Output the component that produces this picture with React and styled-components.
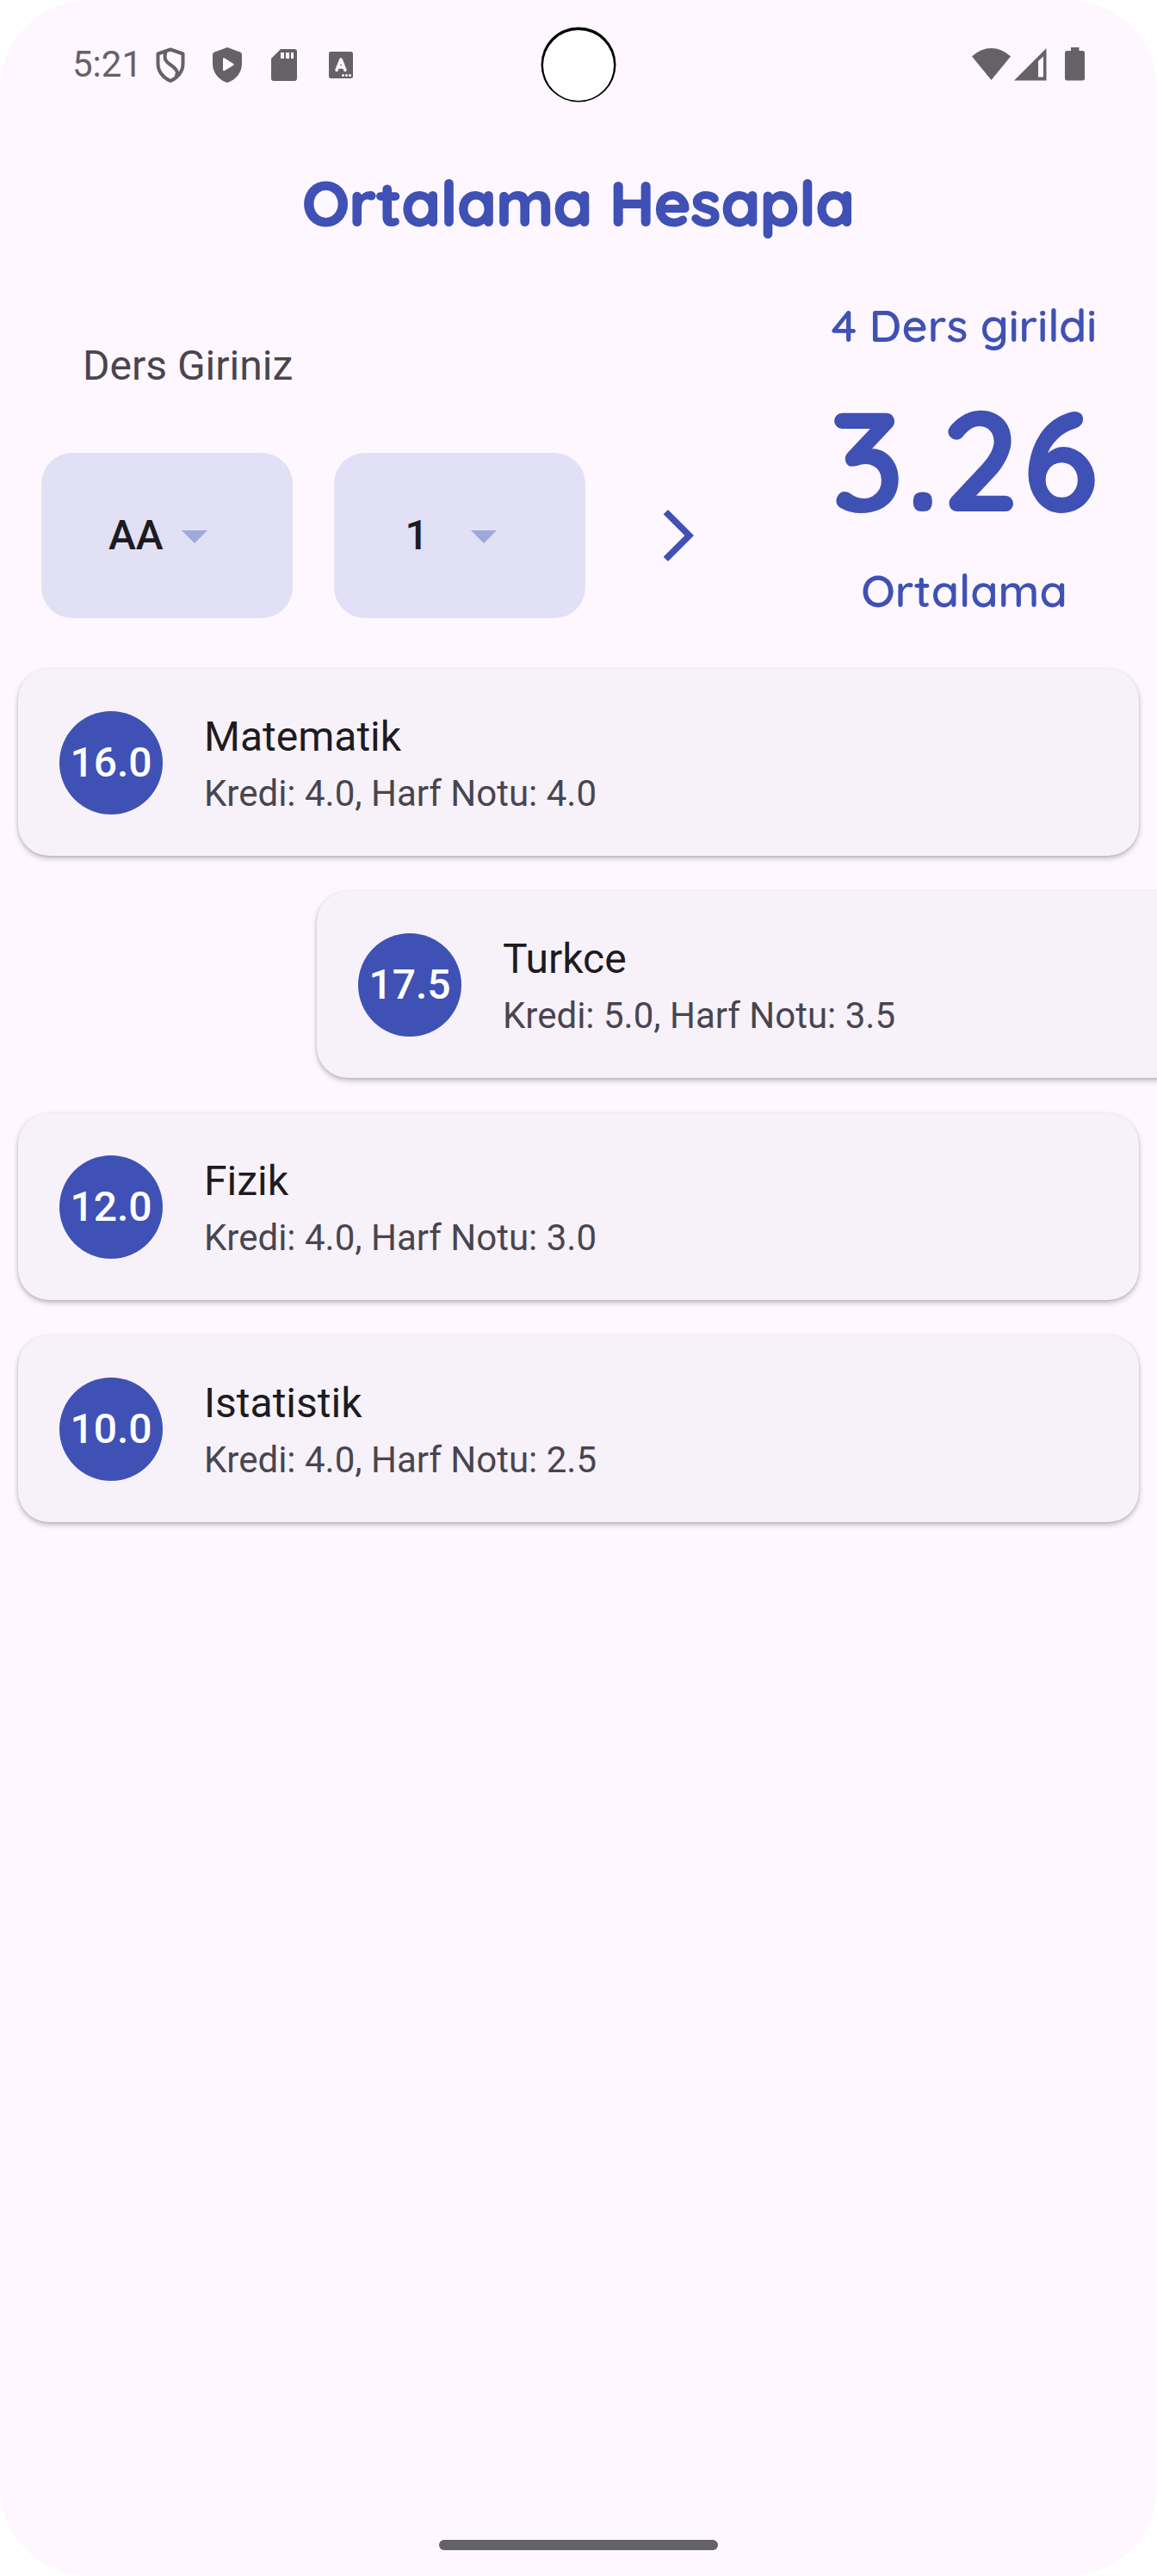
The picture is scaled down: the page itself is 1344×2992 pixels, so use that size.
import React, { useState } from "react";
import styled, { createGlobalStyle, css } from "styled-components";

const indigo = "#3F51B5";
const surface = "#FEF7FF";
const statusInk = "#656267";

const GlobalStyle = createGlobalStyle`
  *, *::before, *::after { box-sizing: border-box; }
  body {
    margin: 0;
    background: #ffffff;
    font-family: Roboto, "Liberation Sans", sans-serif;
  }
`;

const display = css`
  font-family: Quicksand, Inter, sans-serif;
  color: ${indigo};
`;

const Screen = styled.div`
  display: flex;
  flex-direction: column;
  min-height: 100vh;
  overflow: hidden;
  background: ${surface};
  border-radius: 104px;
`;

const StatusBar = styled.header`
  display: grid;
  grid-template-columns: 1fr auto 1fr;
  align-items: center;
  padding: 31px 84px 0;
  color: ${statusInk};
`;

const StatusGroup = styled.div`
  display: flex;
  align-items: center;
  justify-content: ${({ $end }) => ($end ? "flex-end" : "flex-start")};
  gap: ${({ $gap }) => $gap}px;
`;

const Clock = styled.time`
  font-size: 42px;
  line-height: 48px;
`;

const Camera = styled.svg`
  display: block;
  width: 88px;
  height: 88px;
`;

const StatusIcon = styled.svg`
  display: block;
  width: ${({ $width }) => $width || 42}px;
  height: 42px;
  fill: currentColor;
`;

const Title = styled.h1`
  ${display}
  margin: 0;
  padding: 71px 24px 0;
  text-align: center;
  font-size: 72px;
  line-height: 90px;
  font-weight: 700;
  -webkit-text-stroke: 2px ${indigo};
`;

const Summary = styled.section`
  display: grid;
  grid-template-columns: 2fr 1fr;
  padding-top: 66px;
`;

const Form = styled.form`
  display: flex;
  flex-direction: column;
  gap: 24px;
  padding: 0 24px;
`;

const CourseInput = styled.input`
  width: 100%;
  height: 156px;
  padding: 0 72px;
  border: 0;
  outline: 0;
  background: transparent;
  font-family: inherit;
  font-size: 48px;
  line-height: 72px;
  color: #1d1b20;
  &::placeholder { color: #49454f; opacity: 1; }
`;

const FormRow = styled.div`
  display: flex;
  gap: 24px;
  padding-left: 24px;
`;

const Pickers = styled.div`
  display: grid;
  flex: 1;
  grid-template-columns: 1fr 1fr;
  gap: 48px;
`;

const Picker = styled.div`
  display: grid;
  place-content: center;
  align-items: center;
  height: 192px;
  border-radius: 36px;
  background: #e1e0f5;
`;

const PickerSelect = styled.select`
  grid-area: 1 / 1;
  appearance: none;
  margin: 0;
  padding: 0 72px 0 0;
  border: 0;
  outline: 0;
  background: transparent;
  font-family: inherit;
  font-size: 48px;
  line-height: 72px;
  font-weight: 500;
  color: #1d1b20;
`;

const PickerArrow = styled.svg`
  grid-area: 1 / 1;
  justify-self: end;
  width: 72px;
  height: 72px;
  fill: #9fa8da;
  pointer-events: none;
`;

const AddButton = styled.button`
  display: grid;
  place-items: center;
  flex: none;
  width: 168px;
  padding: 0;
  border: 0;
  background: transparent;
  color: ${indigo};
  cursor: pointer;
`;

const AddIcon = styled.svg`
  width: 72px;
  height: 72px;
  fill: currentColor;
`;

const Average = styled.div`
  display: flex;
  flex-direction: column;
  align-items: center;
  justify-content: space-between;
`;

const AverageText = styled.p`
  ${display}
  margin: 0;
  font-size: 52px;
  line-height: 64px;
  font-weight: 600;
`;

const AverageValue = styled.p`
  ${display}
  margin: 0;
  font-size: 165px;
  line-height: 164px;
  font-weight: 700;
`;

const CourseList = styled.ul`
  display: flex;
  flex-direction: column;
  gap: 41px;
  margin: 0;
  padding: 59px 21px 0;
  list-style: none;
`;

const Card = styled.li`
  display: flex;
  align-items: center;
  gap: 48px;
  min-height: 217px;
  padding: 0 48px;
  border-radius: 36px;
  background: #f7f2fa;
  box-shadow: 0 3px 6px rgba(0, 0, 0, 0.24), 0 1px 3px rgba(0, 0, 0, 0.1);
  transform: translateX(${({ $shift }) => $shift}px);
`;

const Score = styled.div`
  display: grid;
  place-items: center;
  flex: none;
  width: 120px;
  height: 120px;
  border-radius: 50%;
  background: ${indigo};
  color: #ffffff;
  font-size: 48px;
  line-height: 72px;
  font-weight: 500;
`;

const CourseName = styled.h2`
  margin: 0;
  font-size: 48px;
  line-height: 72px;
  font-weight: 400;
  color: #1d1b20;
`;

const CourseMeta = styled.p`
  margin: 0;
  font-size: 42px;
  line-height: 60px;
  color: #49454f;
`;

const NavArea = styled.footer`
  display: flex;
  justify-content: center;
  margin-top: auto;
  padding-bottom: 30px;
`;

const NavHandle = styled.div`
  width: 324px;
  height: 12px;
  border-radius: 6px;
  background: ${statusInk};
`;

const letters = ["AA", "BA", "BB", "CB", "CC", "DC", "DD", "FD", "FF"];
const credits = ["1", "2", "3", "4", "5", "6", "7", "8", "9", "10"];

const courses = [
  { name: "Matematik", credit: 4, grade: 4 },
  { name: "Turkce", credit: 5, grade: 3.5, shift: 347 },
  { name: "Fizik", credit: 4, grade: 3 },
  { name: "Istatistik", credit: 4, grade: 2.5 },
];

function Dropdown({ label, options }) {
  const [value, setValue] = useState(options[0]);
  return (
    <Picker>
      <PickerSelect aria-label={label} value={value} onChange={(e) => setValue(e.target.value)}>
        {options.map((o) => (
          <option key={o}>{o}</option>
        ))}
      </PickerSelect>
      <PickerArrow viewBox="0 0 24 24" aria-hidden="true">
        <path d="M7 10l5 5 5-5z" />
      </PickerArrow>
    </Picker>
  );
}

export default function App() {
  const [course, setCourse] = useState("");
  const totalCredit = courses.reduce((sum, c) => sum + c.credit, 0);
  const totalScore = courses.reduce((sum, c) => sum + c.credit * c.grade, 0);
  const average = totalScore / totalCredit;

  return (
    <>
      <GlobalStyle />
      <Screen>
        <StatusBar>
          <StatusGroup $gap={12}>
            <Clock>5:21</Clock>
            <StatusGroup $gap={24}>
              <StatusIcon viewBox="0 0 42 42" aria-hidden="true">
                <path
                  d="M21 3.5 35.5 8.5V20C35.5 29 29.5 36.5 21 40 12.5 36.5 6.5 29 6.5 20V8.5ZM15.5 6C12 18 19 19 24 23.5C29 28 30 30 27.5 35"
                  fill="none"
                  stroke="currentColor"
                  strokeWidth="4"
                  strokeLinejoin="round"
                />
              </StatusIcon>
              <StatusIcon viewBox="0 0 42 42" aria-hidden="true">
                <path
                  fillRule="evenodd"
                  d="M21 1 36 6.5Q38 7.5 38 9.5V20C38 30 31 39 21 42 11 39 4 30 4 20V9.5Q4 7.5 6 6.500ZM16 14.5V27Q16 29 18 28L28 22Q29.5 21 28 20L18 13.5Q16 12.5 16 14.5Z"
                />
              </StatusIcon>
              <StatusIcon viewBox="0 0 42 42" aria-hidden="true">
                <path
                  fillRule="evenodd"
                  d="M17 3H33Q36 3 36 6V37Q36 40 33 40H9Q6 40 6 37V14ZM17 7V14H21V7ZM23 7V14H27V7ZM29 7V14H32V7Z"
                />
              </StatusIcon>
              <StatusIcon viewBox="0 0 42 42" aria-hidden="true">
                <rect x="7" y="6" width="28" height="31" rx="2.5" />
                <path
                  d="M16 27.5 21 15 26 27.5M17.5 24H24.5"
                  fill="none"
                  stroke={surface}
                  strokeWidth="3.5"
                  strokeLinecap="round"
                  strokeLinejoin="round"
                />
                <g fill={surface}>
                  <circle cx="23.5" cy="33.5" r="1.5" />
                  <circle cx="27.5" cy="33.5" r="1.5" />
                  <circle cx="31.5" cy="33.5" r="1.5" />
                </g>
              </StatusIcon>
            </StatusGroup>
          </StatusGroup>
          <Camera viewBox="0 0 88 88" aria-hidden="true">
            <circle cx="44" cy="44" r="43.5" fill="#000000" />
            <circle cx="44" cy="45" r="41" fill="#ffffff" />
          </Camera>
          <StatusGroup $gap={0} $end>
            <StatusIcon $width={48} viewBox="0 0 48 42" aria-hidden="true">
              <path d="M1 11.5Q11 2 23.5 2 36 2 46 11.5L23.5 39Z" />
            </StatusIcon>
            <StatusIcon viewBox="0 0 42 42" aria-hidden="true">
              <path fillRule="evenodd" d="M39.5 2V39.5H2ZM30 17V35.500H36V11.500Z" />
            </StatusIcon>
            <StatusIcon viewBox="0 0 42 42" aria-hidden="true">
              <path d="M26 1H35.5V5H39.5Q42 5 42 7.5V37Q42 39.5 39.5 39.5H21.5Q19 39.5 19 37V7.5Q19 5 21.5 5H26Z" />
            </StatusIcon>
          </StatusGroup>
        </StatusBar>

        <Title>Ortalama Hesapla</Title>

        <Summary>
          <Form onSubmit={(e) => e.preventDefault()}>
            <CourseInput
              type="text"
              aria-label="Ders Giriniz"
              placeholder="Ders Giriniz"
              value={course}
              onChange={(e) => setCourse(e.target.value)}
            />
            <FormRow>
              <Pickers>
                <Dropdown label="Harf Notu" options={letters} />
                <Dropdown label="Kredi" options={credits} />
              </Pickers>
              <AddButton type="submit" aria-label="Ekle">
                <AddIcon viewBox="0 0 24 24" aria-hidden="true">
                  <path d="M6.23 20.23 8 22l10-10L8 2 6.23 3.77 14.46 12z" />
                </AddIcon>
              </AddButton>
            </FormRow>
          </Form>
          <Average>
            <AverageText>{courses.length} Ders girildi</AverageText>
            <AverageValue>{average.toFixed(2)}</AverageValue>
            <AverageText>Ortalama</AverageText>
          </Average>
        </Summary>

        <CourseList>
          {courses.map((c) => (
            <Card key={c.name} $shift={c.shift || 0}>
              <Score>{(c.credit * c.grade).toFixed(1)}</Score>
              <div>
                <CourseName>{c.name}</CourseName>
                <CourseMeta>
                  Kredi: {c.credit.toFixed(1)}, Harf Notu: {c.grade.toFixed(1)}
                </CourseMeta>
              </div>
            </Card>
          ))}
        </CourseList>

        <NavArea>
          <NavHandle />
        </NavArea>
      </Screen>
    </>
  );
}
